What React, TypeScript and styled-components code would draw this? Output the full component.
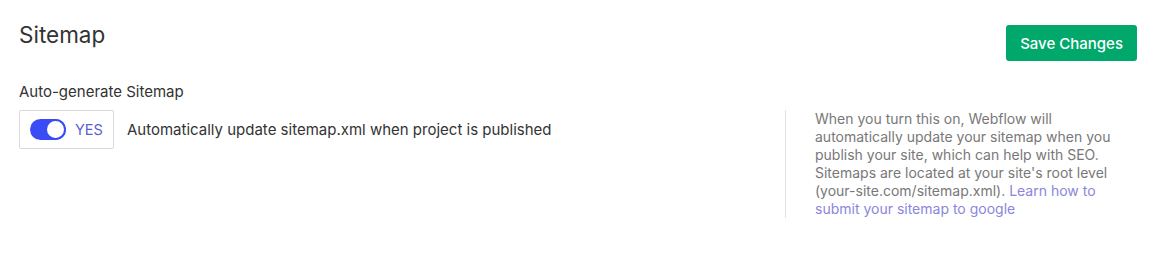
import React from "react";
import styled, { createGlobalStyle } from "styled-components";

const Global = createGlobalStyle`
  html, body { margin: 0; padding: 0; background: #fff; }
  body { font-family: Inter, "Noto Sans", sans-serif; -webkit-font-smoothing: antialiased; }
`;

const Page = styled.div`
  padding: 25px 22px 0 19px;
`;

const Header = styled.div`
  display: flex;
  justify-content: space-between;
  align-items: flex-start;
`;

const Title = styled.h1`
  margin: 0;
  font-size: 22.5px;
  font-weight: 400;
  color: #333;
  line-height: 20px;
`;

const SaveButton = styled.button`
  height: 36px;
  padding: 0 14px;
  border: none;
  border-radius: 3px;
  background: #00a86b;
  color: #fff;
  font-family: Inter, sans-serif;
  font-size: 15px;
  font-weight: 500;
  cursor: pointer;
`;

const Body = styled.div`
  display: flex;
  margin-top: 22px;
`;

const Main = styled.div`
  flex: 1;
`;

const Label = styled.div`
  font-size: 15px;
  color: #333;
  line-height: 18px;
  margin-bottom: 9px;
`;

const Row = styled.div`
  display: flex;
  align-items: center;
  gap: 13px;
`;

const ToggleBox = styled.div`
  box-sizing: border-box;
  width: 95px;
  height: 39px;
  border: 1px solid #d9d9d9;
  border-radius: 2px;
  display: flex;
  align-items: center;
  padding-left: 10px;
  gap: 9px;
`;

const Switch = styled.div<{ $on: boolean }>`
  box-sizing: border-box;
  width: 36px;
  height: 21px;
  border-radius: 11px;
  background: ${(p) => (p.$on ? "#3a4cf5" : "#ccc")};
  display: flex;
  justify-content: ${(p) => (p.$on ? "flex-end" : "flex-start")};
  align-items: center;
`;

const Knob = styled.div`
  box-sizing: border-box;
  width: 21px;
  height: 21px;
  border-radius: 50%;
  background: #fff;
  border: 2px solid #3a4cf5;
`;

const YesText = styled.span`
  font-size: 14.5px;
  color: #5b5fd6;
`;

const Description = styled.span`
  font-size: 15px;
  color: #333;
`;

const Aside = styled.div`
  width: 312px;
  border-left: 1px solid #e3e3e3;
  padding-left: 29px;
  margin-top: 27px;
  margin-right: 10px;
  font-size: 14px;
  line-height: 18px;
  color: #787878;
`;

const Link = styled.a`
  color: #8a86dd;
  text-decoration: none;
`;

export default function App() {
  return (
    <Page>
      <Global />
      <Header>
        <Title>Sitemap</Title>
        <SaveButton>Save Changes</SaveButton>
      </Header>
      <Body>
        <Main>
          <Label>Auto-generate Sitemap</Label>
          <Row>
            <ToggleBox>
              <Switch $on>
                <Knob />
              </Switch>
              <YesText>YES</YesText>
            </ToggleBox>
            <Description>Automatically update sitemap.xml when project is published</Description>
          </Row>
        </Main>
        <Aside>
          When you turn this on, Webflow will automatically update your sitemap when you
          publish your site, which can help with SEO. Sitemaps are located at your site's root
          level (your-site.com/sitemap.xml).{" "}
          <Link href="#">Learn how to submit your sitemap to google</Link>
        </Aside>
      </Body>
    </Page>
  );
}
